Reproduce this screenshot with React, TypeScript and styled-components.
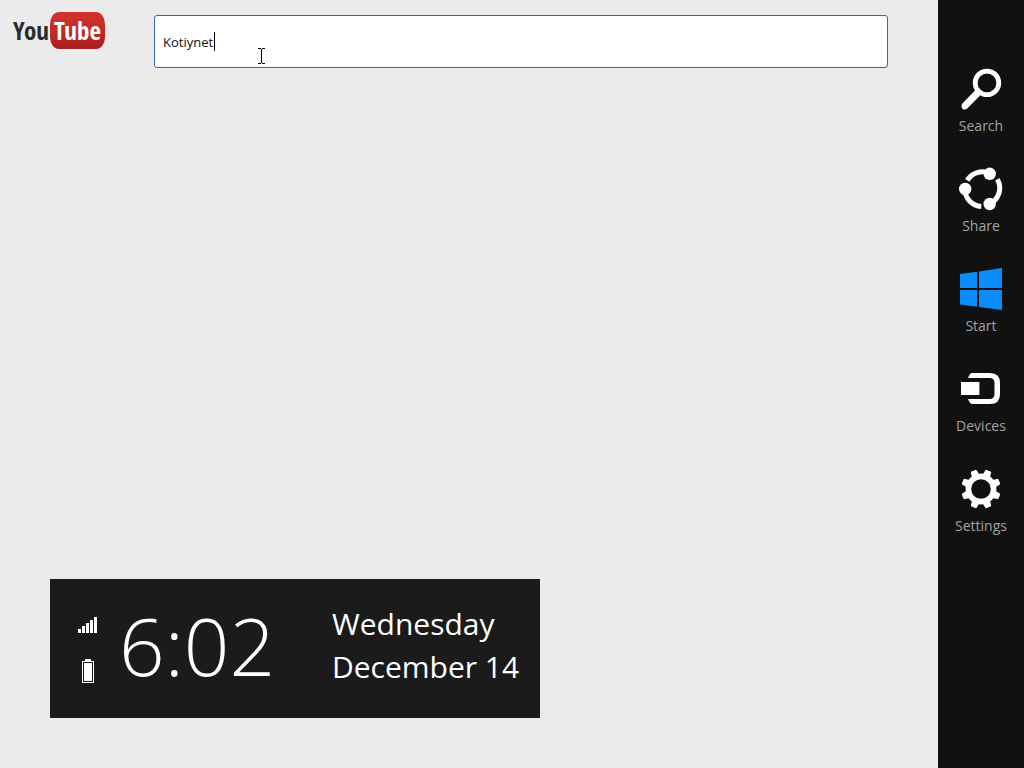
import React, { useState } from "react";
import styled, { createGlobalStyle } from "styled-components";

const GlobalStyle = createGlobalStyle`
  * { box-sizing: border-box; }
  body {
    margin: 0;
    background: #ebebeb;
    font-family: "Open Sans", "Noto Sans", sans-serif;
  }
`;

const Screen = styled.div`
  display: flex;
  min-height: 100vh;
`;

const Main = styled.main`
  flex: 1;
  min-width: 0;
  display: flex;
  flex-direction: column;
  justify-content: space-between;
  align-items: flex-start;
  padding: 12px 50px 50px 12px;
`;

const Header = styled.header`
  display: flex;
  align-items: flex-start;
  align-self: stretch;
  gap: 49px;
`;

const Logo = styled.a`
  display: flex;
  align-items: flex-start;
  width: 93px;
  height: 38px;
  color: #2b2b2b;
  font: bold 25px/37px "Open Sans Condensed", "Liberation Sans", sans-serif;
  text-decoration: none;
`;

const LogoYou = styled.span`
  width: 38px;
  text-align: center;
`;

const LogoTube = styled.span`
  flex: 1;
  height: 37px;
  border-radius: 9px / 12px;
  background: linear-gradient(#d2322e, #c52b28 50%, #a81e1e);
  color: #fff;
  text-align: center;
`;

const SearchField = styled.div`
  position: relative;
  flex: 1;
  margin-top: 3px;
`;

const SearchInput = styled.input`
  display: block;
  width: 100%;
  height: 53px;
  padding: 0 8px;
  border: 1px solid #3b66ad;
  border-radius: 3px;
  outline: none;
  background: #fff;
  color: #111;
  caret-color: transparent;
  font: 13px "Open Sans", "Noto Sans", sans-serif;
`;

const Caret = styled.span`
  position: absolute;
  left: 60px;
  top: 17px;
  width: 1px;
  height: 19px;
  background: #000;
`;

const Pointer = styled.svg`
  position: absolute;
  left: 104px;
  top: 33px;
`;

const ClockPanel = styled.section`
  display: flex;
  align-items: center;
  width: 490px;
  max-width: 100%;
  height: 139px;
  margin-left: 38px;
  padding: 0 20px 0 28px;
  background: #1b1b1b;
  color: #fff;
`;

const StatusIcons = styled.div`
  display: flex;
  flex-direction: column;
  align-items: center;
  gap: 26px;
  margin-right: 22px;
  padding-top: 2px;
`;

const Time = styled.time`
  flex: 1;
  padding-bottom: 8px;
  font-size: 80px;
  font-weight: 300;
  line-height: 100px;
`;

const DateText = styled.div`
  width: 188px;
  padding-bottom: 8px;
  font-size: 30px;
  line-height: 43px;
  white-space: nowrap;
`;

const Charms = styled.nav`
  display: flex;
  flex-direction: column;
  width: 86px;
  padding-top: 67px;
  background: #111;
`;

const Charm = styled.button`
  display: flex;
  flex-direction: column;
  align-items: center;
  justify-content: flex-start;
  gap: 5px;
  height: 100px;
  padding: 0 0 31px;
  border: 0;
  background: none;
  color: #a3a3a3;
  font: 14px/20px "Open Sans", "Noto Sans", sans-serif;
  cursor: pointer;
`;

const SearchIcon = () => (
  <svg width="44" height="44" viewBox="0 0 44 44" fill="none" stroke="#fff">
    <circle cx="28" cy="15.9" r="11.8" strokeWidth="4.8" />
    <path d="M19 22.6L16 23.6L3.2 36.8Q1.4 39.2 3.2 41.4Q5.6 43.6 8 41.8L20.6 29L21.6 25.4z" fill="#fff" stroke="none" />
  </svg>
);

const ShareIcon = () => (
  <svg width="44" height="44" viewBox="0 0 44 44" fill="none" stroke="#fff" strokeWidth="5">
    <path d="M38.4 12.2A17.8 17.8 0 0 1 30.7 37" />
    <path d="M22.3 39.4A17.8 17.8 0 0 1 5.7 22" />
    <path d="M8.3 13.4A17.8 17.8 0 0 1 30.7 6.3" />
    <g fill="#fff" stroke="none">
      <circle cx="30.7" cy="6.8" r="6.2" />
      <circle cx="6.2" cy="22" r="6.2" />
      <circle cx="30.7" cy="37" r="6.2" />
    </g>
  </svg>
);

const StartIcon = () => (
  <svg width="44" height="44" viewBox="0 0 44 44" fill="#0a8cff">
    <path d="M1 7L18 4.7V21H1zM20 4.4L43 1V21H20zM1 23H18V39.8L1 37.6zM20 23H43V43L20 40z" />
  </svg>
);

const DevicesIcon = () => (
  <svg width="44" height="44" viewBox="0 0 44 44" fill="#fff">
    <path d="M13 6H31Q41 6 41 16V27Q41 37 31 37H13Q11 37 9 32H30.5Q35.5 32 35.5 27V16Q35.5 11 30.5 11H9Q11 6 13 6z" />
    <path d="M2 15H20.4V28H2z" />
  </svg>
);

const SettingsIcon = () => (
  <svg width="44" height="44" viewBox="0 0 44 44" fill="#fff">
    <circle cx="22" cy="22" r="12.6" fill="none" stroke="#fff" strokeWidth="5.6" />
    {[0, 1, 2, 3, 4, 5, 6, 7].map((n) => (
      <path
        key={n}
        d="M18 9L18.8 3.4Q19 2.2 20 2.2H24Q25 2.2 25.2 3.4L26 9z"
        transform={`rotate(${22.5 + 45 * n} 22 22)`}
      />
    ))}
  </svg>
);

const charms = [
  { label: "Search", Icon: SearchIcon },
  { label: "Share", Icon: ShareIcon },
  { label: "Start", Icon: StartIcon },
  { label: "Devices", Icon: DevicesIcon },
  { label: "Settings", Icon: SettingsIcon },
];

export default function App() {
  const [query, setQuery] = useState("Kotiynet");
  return (
    <Screen>
      <GlobalStyle />
      <Main>
        <Header>
          <Logo href="#">
            <LogoYou>You</LogoYou>
            <LogoTube>Tube</LogoTube>
          </Logo>
          <SearchField>
            <SearchInput
              type="text"
              aria-label="Search"
              value={query}
              onChange={(e) => setQuery(e.target.value)}
            />
            <Caret />
            <Pointer width="7" height="16" viewBox="0 0 7 16" fill="none" stroke="#000" aria-hidden="true">
              <path d="M0 .5H3M4 .5H7M3.5 1V15M0 15.5H3M4 15.5H7" />
            </Pointer>
          </SearchField>
        </Header>
        <ClockPanel>
          <StatusIcons>
            <svg width="19" height="16" viewBox="0 0 19 16" fill="#fff">
              <path d="M0 12H3V16H0zM4 9H7V16H4zM8 6H11V16H8zM12 3H15V16H12zM16 0H19V16H16z" />
            </svg>
            <svg width="12" height="24" viewBox="0 0 12 24" fill="#fff">
              <path d="M3 0H9V2H12V24H0V2H3zM1 3V23H11V3z" fillRule="evenodd" />
              <path d="M2 4H10V22H2z" />
            </svg>
          </StatusIcons>
          <Time>6:02</Time>
          <DateText>
            <div>Wednesday</div>
            <div>December 14</div>
          </DateText>
        </ClockPanel>
      </Main>
      <Charms>
        {charms.map(({ label, Icon }) => (
          <Charm key={label} type="button">
            <Icon />
            {label}
          </Charm>
        ))}
      </Charms>
    </Screen>
  );
}
